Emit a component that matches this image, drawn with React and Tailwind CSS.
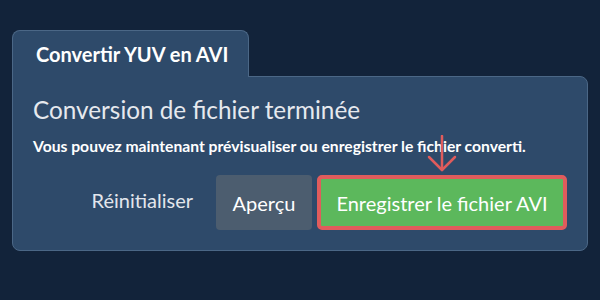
export default function App() {
  return (
    <div className="w-[600px] h-[300px] bg-[#12233a] pt-[30px] pl-[12px] [font-family:Lato,'Noto_Sans',sans-serif]">
      <div className="w-[576px]">
        <div className="relative z-10 -mb-px w-[237px] h-[47px] rounded-t-[8px] border border-b-0 border-[#4b6786] bg-[#2e4a6a] pl-[23px] pt-[11px]">
          <span className="text-[20px] font-bold text-white leading-[24px]">Convertir YUV en AVI</span>
        </div>
        <div className="relative h-[175px] rounded-b-[8px] rounded-tr-[8px] border border-[#4b6786] bg-[#2e4a6a] pl-[20px] pr-[20px] pt-[19px]">
          <h1 className="text-[24.3px] leading-[28px] text-[#e6e9ee]">Conversion de fichier terminée</h1>
          <p className="mt-[13px] text-[15.7px] font-bold leading-[18px] text-white">Vous pouvez maintenant prévisualiser ou enregistrer le fichier converti.</p>
          <div className="mt-[20px] flex items-center justify-end">
            <button className="mr-[23px] -mt-[5px] text-[20px] text-[#e2e6ec]">Réinitialiser</button>
            <button className="mr-[5px] h-[55px] w-[96px] rounded-[4px] bg-[#4c5d6f] text-[20px] text-white">Aperçu</button>
            <button className="h-[55px] w-[250px] rounded-[5px] border-[4px] border-[#e05c5c] bg-[#5cb85c] text-[20px] text-white">Enregistrer le fichier AVI</button>
          </div>
          <svg className="absolute left-[414px] top-[58px]" width="30" height="38" viewBox="0 0 30 38" fill="none" stroke="#e05c5c" strokeWidth="2.5" strokeLinecap="round" strokeLinejoin="round">
            <path d="M15 1 V35" />
            <path d="M2 22 L15 35 L28 22" />
          </svg>
        </div>
      </div>
    </div>
  );
}
